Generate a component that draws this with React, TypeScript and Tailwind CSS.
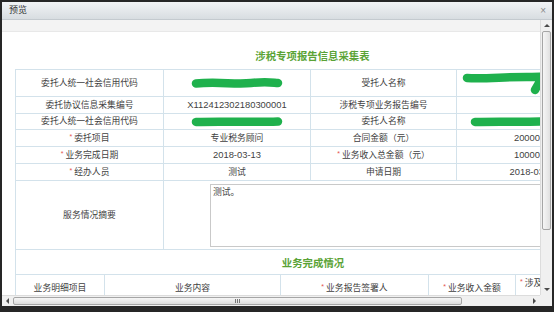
import React from "react";

const BORDER = "border border-[#d3e2eb]";
const CELL = `${BORDER} p-0 text-center align-middle text-[8.8px] leading-none text-[#3f3f3f]`;
const NUM = "text-[9.4px]";

function Req() {
  return <span className="relative -top-[2px] mr-[2px] text-[7px] text-[#e5544d]">*</span>;
}

function Scribble({ w, h, d }: { w: number; h: number; d: string }) {
  return (
    <svg width={w} height={h} viewBox={`0 0 ${w} ${h}`} className="block">
      <path d={d} fill="none" stroke="#1fb14d" strokeWidth={8.5} strokeLinecap="round" strokeLinejoin="round" />
    </svg>
  );
}

function Arrow({ dir }: { dir: "up" | "down" | "left" | "right" }) {
  const pts = {
    up: "0,4 3,1 6,4",
    down: "0,1 3,4 6,1",
    left: "4,0 1,3 4,6",
    right: "1,0 4,3 1,6",
  }[dir];
  const vertical = dir === "up" || dir === "down";
  return (
    <svg width={vertical ? 6 : 5} height={vertical ? 5 : 6} className="block">
      <polygon points={pts} fill="#4a4a4a" />
    </svg>
  );
}

export default function App() {
  return (
    <div className="w-[554px] h-[312px] bg-[#262626] pt-[2px] px-[2px] pb-[6px] font-['Liberation_Sans','Noto_Sans_CJK_SC',sans-serif]">
      <div className="flex h-full w-full flex-col bg-white">
        {/* Title bar */}
        <div className="flex h-[18px] shrink-0 items-center justify-between border-b border-[#c4cacf] bg-gradient-to-b from-[#f1f3f5] to-[#d8dde1] pl-[7px] pr-[6px]">
          <span className="text-[9px] text-[#333]">预览</span>
          <span className="text-[10px] leading-none text-[#8a8a8a]">×</span>
        </div>

        {/* Body with scrollbars */}
        <div className="grid min-h-0 flex-1 grid-cols-[1fr_12px] grid-rows-[1fr_11px]">
          {/* Viewport */}
          <div className="overflow-hidden">
            <div className="h-[12px] w-[640px] border-b border-[#e8e8e8] bg-[#f3f3f3]" />
            <div className="w-[640px] bg-white px-[13px]">
              {/* Form title */}
              <div className="flex h-[37px] w-[595px] justify-center pt-[18px]">
                <span className="text-[10.4px] font-bold leading-[14px] text-[#5aa336]">涉税专项报告信息采集表</span>
              </div>

              <table className="w-[595px] table-fixed border-collapse">
                <colgroup>
                  <col className="w-[148px]" />
                  <col className="w-[147px]" />
                  <col className="w-[146px]" />
                  <col className="w-[154px]" />
                </colgroup>
                <tbody>
                  <tr className="h-[27px]">
                    <td className={CELL}>委托人统一社会信用代码</td>
                    <td className={CELL}>
                      <div className="flex justify-center">
                        <Scribble w={92} h={12} d="M5 6.5 C 25 4.5, 45 7.5, 60 6 S 80 5.5, 87 6" />
                      </div>
                    </td>
                    <td className={CELL}>受托人名称</td>
                    <td className={CELL}>
                      <div className="pl-[5px]">
                        <Scribble w={92} h={23} d="M5 6 C 25 7, 45 4.5, 70 5 L 82 4.5 M 80 5 C 78 10, 75 14, 73 18" />
                      </div>
                    </td>
                  </tr>
                  <tr className="h-[17px]">
                    <td className={CELL}>委托协议信息采集编号</td>
                    <td className={`${CELL} ${NUM}`}>X112412302180300001</td>
                    <td className={CELL}>涉税专项业务报告编号</td>
                    <td className={CELL}></td>
                  </tr>
                  <tr className="h-[16px]">
                    <td className={CELL}>委托人统一社会信用代码</td>
                    <td className={CELL}>
                      <div className="flex justify-center">
                        <Scribble w={92} h={10} d="M5 5 C 30 4, 60 5.5, 87 4.5" />
                      </div>
                    </td>
                    <td className={CELL}>委托人名称</td>
                    <td className={CELL}>
                      <div className="pl-[13px]">
                        <Scribble w={92} h={11} d="M5 6 C 30 5, 55 6.5, 87 5" />
                      </div>
                    </td>
                  </tr>
                  <tr className="h-[17px]">
                    <td className={CELL}><Req />委托项目</td>
                    <td className={CELL}>专业税务顾问</td>
                    <td className={CELL}>合同金额（元）</td>
                    <td className={`${CELL} ${NUM}`}>20000.00</td>
                  </tr>
                  <tr className="h-[17px]">
                    <td className={CELL}><Req />业务完成日期</td>
                    <td className={`${CELL} ${NUM}`}>2018-03-13</td>
                    <td className={CELL}><Req />业务收入总金额（元）</td>
                    <td className={`${CELL} ${NUM}`}>10000.00</td>
                  </tr>
                  <tr className="h-[17px]">
                    <td className={CELL}><Req />经办人员</td>
                    <td className={CELL}>测试</td>
                    <td className={CELL}>申请日期</td>
                    <td className={`${CELL} ${NUM}`}>2018-03-13</td>
                  </tr>
                  <tr className="h-[69px]">
                    <td className={CELL}>服务情况摘要</td>
                    <td className={`${BORDER} p-0 align-middle`} colSpan={3}>
                      <div className="ml-[46px] h-[63px] w-[380px] border border-[#c9c9c9] px-[2px] pt-[2px] text-[8.8px] leading-[10px] text-[#3f3f3f]">
                        测试。
                      </div>
                    </td>
                  </tr>
                  <tr className="h-[25px]">
                    <td className={`${BORDER} p-0 text-center align-middle`} colSpan={4}>
                      <span className="text-[10.4px] font-bold leading-none text-[#5aa336]">业务完成情况</span>
                    </td>
                  </tr>
                </tbody>
              </table>

              <table className="w-[595px] table-fixed border-collapse">
                <colgroup>
                  <col className="w-[89px]" />
                  <col className="w-[176px]" />
                  <col className="w-[148px]" />
                  <col className="w-[87px]" />
                  <col className="w-[95px]" />
                </colgroup>
                <tbody>
                  <tr className="h-[27px]">
                    <td className={`${CELL} border-t-0`}>业务明细项目</td>
                    <td className={`${CELL} border-t-0`}>业务内容</td>
                    <td className={`${CELL} border-t-0`}><Req />业务报告签署人</td>
                    <td className={`${CELL} border-t-0`}><Req />业务收入金额</td>
                    <td className={`${CELL} border-t-0 whitespace-nowrap px-[4px] pt-[4px] text-left align-top`}><Req />涉及金额（元）</td>
                  </tr>
                </tbody>
              </table>
              <div className="h-[40px]" />
            </div>
          </div>

          {/* Vertical scrollbar */}
          <div className="flex flex-col border-l border-[#dcdcdc] bg-[#f0f0f0]">
            <div className="flex h-[11px] items-center justify-center">
              <Arrow dir="up" />
            </div>
            <div className="mx-[1px] h-[199px] rounded-[2px] border border-[#a5a5a5] bg-gradient-to-r from-[#f6f6f6] to-[#e0e0e0]" />
            <div className="flex-1" />
            <div className="flex h-[11px] items-center justify-center">
              <Arrow dir="down" />
            </div>
          </div>

          {/* Horizontal scrollbar */}
          <div className="flex items-stretch border-t border-[#dcdcdc] bg-[#f0f0f0]">
            <div className="flex w-[11px] items-center justify-center">
              <Arrow dir="left" />
            </div>
            <div className="my-[1px] flex w-[449px] items-center justify-center rounded-[2px] border border-[#a5a5a5] bg-gradient-to-b from-[#f6f6f6] to-[#dcdcdc]">
              <div className="flex gap-[1px]">
                <span className="h-[4px] w-px bg-[#777]" />
                <span className="h-[4px] w-px bg-[#777]" />
                <span className="h-[4px] w-px bg-[#777]" />
              </div>
            </div>
            <div className="flex-1" />
            <div className="flex w-[11px] items-center justify-center">
              <Arrow dir="right" />
            </div>
          </div>

          {/* Corner */}
          <div className="bg-[#f0f0f0]" />
        </div>
      </div>
    </div>
  );
}
